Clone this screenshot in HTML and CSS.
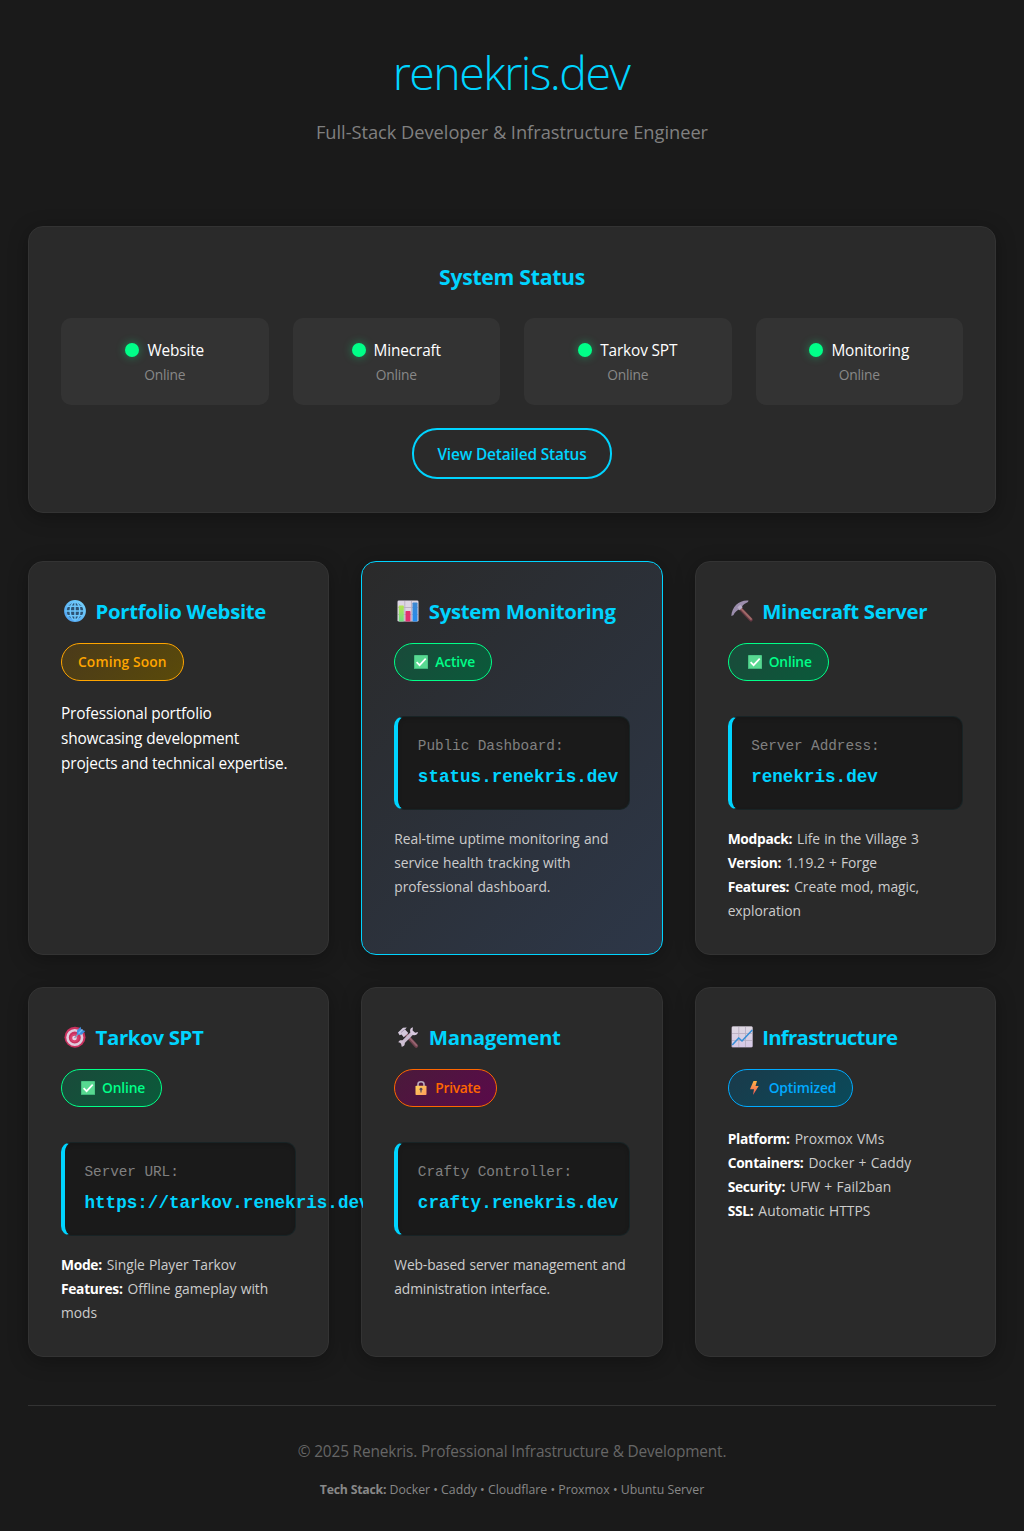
FILE: index.html
```html
<!DOCTYPE html>
<html lang="en">
<head>
<meta charset="utf-8">
<meta name="viewport" content="width=device-width, initial-scale=1">
<title>renekris.dev</title>
<link rel="stylesheet" href="styles.css">
</head>
<body>
<svg class="sprite" aria-hidden="true">
  <symbol id="check" viewBox="0 0 14 14">
    <rect width="14" height="14" rx=".6" fill="#3fb67a"/>
    <rect x=".7" y=".5" width="12.8" height="12.6" rx=".5" fill="#58d891"/>
    <path d="M2.6 7.2 5.6 10.2 11.7 3.7" fill="none" stroke="#fff" stroke-width="1.7"/>
  </symbol>
</svg>
<div class="container">
  <header class="header">
    <h1 class="title">renekris.dev</h1>
    <p class="subtitle">Full-Stack Developer &amp; Infrastructure Engineer</p>
  </header>

  <section class="status">
    <h2 class="status-title">System Status</h2>
    <div class="status-grid">
      <div class="status-item"><div class="status-name"><span class="dot"></span><span>Website</span></div><div class="status-state">Online</div></div>
      <div class="status-item"><div class="status-name"><span class="dot"></span><span>Minecraft</span></div><div class="status-state">Online</div></div>
      <div class="status-item"><div class="status-name"><span class="dot"></span><span>Tarkov SPT</span></div><div class="status-state">Online</div></div>
      <div class="status-item"><div class="status-name"><span class="dot"></span><span>Monitoring</span></div><div class="status-state">Online</div></div>
    </div>
    <a class="status-button" href="#">View Detailed Status</a>
  </section>

  <main class="cards">
    <article class="card">
      <h3 class="card-title">
        <svg class="icon" viewBox="0 0 22 22"><defs><linearGradient id="gl" x1="1" y1="0" x2="0" y2="1"><stop offset="0" stop-color="#79d8ff"/><stop offset="1" stop-color="#4b9df0"/></linearGradient></defs><circle cx="11" cy="11" r="10.9" fill="url(#gl)"/><circle cx="11" cy="11" r="8.300" fill="#2d5273"/><g fill="none" stroke="#6cc6fb" stroke-width="1.500"><ellipse cx="11" cy="11" rx="4.800" ry="9"/><path d="M11 1.500V20.500M1.500 11H20.500M3 6.200H19M3 15.800H19"/></g></svg>
        <span>Portfolio Website</span></h3>
      <div class="badge badge-soon"><span>Coming Soon</span></div>
      <p class="intro">Professional portfolio showcasing development projects and technical expertise.</p>
    </article>

    <article class="card card-featured">
      <h3 class="card-title">
        <svg class="icon" viewBox="0 0 22 22"><defs><linearGradient id="pg" x1="0" y1="0" x2="0" y2="1"><stop offset="0" stop-color="#b5e44f"/><stop offset="1" stop-color="#6fdc83"/></linearGradient><linearGradient id="pb" x1="0" y1="0" x2="0" y2="1"><stop offset="0" stop-color="#3f87cf"/><stop offset="1" stop-color="#248cf0"/></linearGradient></defs><rect x=".5" y=".5" width="21" height="21" rx="1.300" fill="#ddd6e4"/><path d="M7.800 1V21M14.500 1V21M1 7.500H21M1 14.500H21" stroke="#b9afc2" stroke-width=".9"/><rect x="1.800" y="5.500" width="5" height="16" rx=".7" fill="url(#pg)"/><rect x="8.500" y="11" width="5" height="10.500" rx=".7" fill="#e0316f"/><rect x="15.500" y="2.500" width="5" height="19" rx=".7" fill="url(#pb)"/></svg>
        <span>System Monitoring</span></h3>
      <div class="badge badge-online"><svg class="badge-icon"><use href="#check"/></svg><span>Active</span></div>
      <div class="code"><div class="code-label">Public Dashboard:</div><div class="code-url">status.renekris.dev</div></div>
      <p class="details">Real-time uptime monitoring and service health tracking with professional dashboard.</p>
    </article>

    <article class="card">
      <h3 class="card-title">
        <svg class="icon" viewBox="0 0 22 22"><path d="M9 8.200 20 19.700" stroke="#683a45" stroke-width="3.400" stroke-linecap="round"/><path d="M9.500 8.200 20 19" stroke="#a06a68" stroke-width="1.800" stroke-linecap="round"/><path d="M17.500.5C8.500-.4 1 6.300.3 15.900L2.300 15.200C4 12 6 10.400 8.200 9.600L10.900 7C12 4.400 14.500 3 17 1.900Z" fill="#9b8dac"/><path d="M6.400 7.300 9.300 4.800 11.600 7.300 8.700 10.200Z" fill="#b9adc7"/></svg>
        <span>Minecraft Server</span></h3>
      <div class="badge badge-online"><svg class="badge-icon"><use href="#check"/></svg><span>Online</span></div>
      <div class="code"><div class="code-label">Server Address:</div><div class="code-url">renekris.dev</div></div>
      <p class="details"><strong>Modpack:</strong> Life in the Village 3<br><strong>Version:</strong> 1.19.2 + Forge<br><strong>Features:</strong> Create mod, magic, exploration</p>
    </article>

    <article class="card">
      <h3 class="card-title">
        <svg class="icon" viewBox="0 0 22 22"><circle cx="11" cy="11.200" r="10.500" fill="#ca315f"/><circle cx="10.800" cy="11.500" r="7.300" fill="none" stroke="#dfcbdc" stroke-width="2.600"/><circle cx="10.500" cy="12" r="4.300" fill="#d9426f"/><circle cx="10.500" cy="12" r="2.300" fill="#ead5e5"/><path d="M10.500 12 16 6" stroke="#8f9fbd" stroke-width="1.300"/><path d="M12.800 8.500 13 4.500 16.500.8 17.400 3.800 21.300 5 17.500 8.800Z" fill="#3d91df"/><path d="M14.500 7.500 18.500 3.500" stroke="#72c4f7" stroke-width="1.200"/></svg>
        <span>Tarkov SPT</span></h3>
      <div class="badge badge-online"><svg class="badge-icon"><use href="#check"/></svg><span>Online</span></div>
      <div class="code"><div class="code-label">Server URL:</div><div class="code-url code-url-long">https://tarkov.renekris.dev</div></div>
      <p class="details"><strong>Mode:</strong> Single Player Tarkov<br><strong>Features:</strong> Offline gameplay with mods</p>
    </article>

    <article class="card">
      <h3 class="card-title">
        <svg class="icon" viewBox="0 0 22 22"><path d="M8.500 8 19.300 20" stroke="#70434f" stroke-width="3.600" stroke-linecap="round"/><path d="M9 8 19.500 19.300" stroke="#976571" stroke-width="1.700" stroke-linecap="round"/><path d="M1 6.600 6 1.800 9.800 1.500 8 3.500 11.300 7 6.800 11.200 4.500 8.600 2.600 9.200Z" fill="#d4c9dc"/><path d="M4 6.500 8 3.200" stroke="#aa9bb4" stroke-width="1"/><path d="M4.300 18.100 14.800 7.500" stroke="#c9bacf" stroke-width="3.600"/><path d="M15.900 1.300C12.500 2 12.500 5.600 14.300 8.200 17 10.300 20.500 9 21 5.900L18.200 6.800 15.600 4.500Z" fill="#d8c9df"/><path d="M1.300 16.300 4 17 4.700 20.700C8 20.500 8.400 17.500 7 15.600 5.200 13.700 2.200 13.700 1.300 16.300Z" fill="#cfc0d4"/></svg>
        <span>Management</span></h3>
      <div class="badge badge-private"><svg class="badge-icon" viewBox="0 0 14 14"><defs><linearGradient id="lk" x1="0" y1="0" x2="1" y2="1"><stop offset="0" stop-color="#ffd35a"/><stop offset="1" stop-color="#ff9a5c"/></linearGradient></defs><path d="M4 6V3.300Q4 .8 7 .8T10 3.300V6" fill="none" stroke="#b9a9bd" stroke-width="1.600"/><rect x="1.500" y="4.800" width="11" height="9.200" rx=".8" fill="url(#lk)"/><circle cx="7" cy="8.200" r="1.400" fill="#5b4a55"/><path d="M7 8.500V11.500" stroke="#5b4a55" stroke-width="1.200"/></svg><span>Private</span></div>
      <div class="code"><div class="code-label">Crafty Controller:</div><div class="code-url">crafty.renekris.dev</div></div>
      <p class="details details-tight">Web-based server management and administration interface.</p>
    </article>

    <article class="card">
      <h3 class="card-title card-title-tight">
        <svg class="icon" viewBox="0 0 22 22"><defs><linearGradient id="tr" x1="0" y1="0" x2="0" y2="1"><stop offset="0" stop-color="#ded8e2"/><stop offset="1" stop-color="#d5c8e6"/></linearGradient></defs><rect x=".5" y=".5" width="21" height="21" rx="1.300" fill="#a99bb2"/><rect x="1" y=".5" width="20.500" height="20.500" rx="1" fill="url(#tr)"/><path d="M7.800 1V21M14.500 1V21M1 7.500H21M1 14.500H21" stroke="#b9afc2" stroke-width=".9"/><path d="M1.200 19 7.700 12 11 15 21.300 4" fill="none" stroke="#378fd6" stroke-width="1.600"/></svg>
        <span>Infrastructure</span></h3>
      <div class="badge badge-optimized"><svg class="badge-icon" viewBox="0 0 14 14"><defs><linearGradient id="bt" x1="0" y1="0" x2="0" y2="1"><stop offset="0" stop-color="#ffb545"/><stop offset="1" stop-color="#f45758"/></linearGradient></defs><path d="M5.500 0H9L7.500 5H10.700L5 14 6 8.300H2Z" fill="url(#bt)"/></svg><span>Optimized</span></div>
      <p class="details details-wide"><strong>Platform:</strong> Proxmox VMs<br><strong>Containers:</strong> Docker + Caddy<br><strong>Security:</strong> UFW + Fail2ban<br><strong>SSL:</strong> Automatic HTTPS</p>
    </article>
  </main>

  <footer class="footer">
    <p class="copyright">© 2025 Renekris. Professional Infrastructure &amp; Development.</p>
    <p class="stack"><strong>Tech Stack:</strong> Docker • Caddy • Cloudflare • Proxmox • Ubuntu Server</p>
  </footer>
</div>
</body>
</html>
```
FILE: styles.css
```css
* { box-sizing: border-box; margin: 0; padding: 0; }

body {
  background: #1a1a1a;
  color: #fff;
  font-family: "Open Sans", "Noto Sans", sans-serif;
  font-size: 15.4px;
}

.sprite { display: none; }

.container { padding: 36px 28px 0; }

/* Header */
.header { text-align: center; padding-bottom: 79px; }
.title { font-size: 46.5px; font-weight: 300; line-height: 72px; letter-spacing: -1.55px; text-indent: -2px; color: #00d4ff; }
.subtitle { margin-top: 9px; font-size: 18.3px; font-weight: 400; line-height: 30px; letter-spacing: -0.04px; color: #808080; }

/* System status */
.status,
.card {
  background: #2a2a2a;
  border: 1px solid #333;
  border-radius: 15px;
  box-shadow: 0 4px 20px rgba(0, 0, 0, 0.3);
}
.status { display: flex; flex-direction: column; align-items: center; padding: 32px; height: 287px; }
.status-title { font-size: 21.2px; font-weight: 700; line-height: 36px; letter-spacing: -0.28px; color: #00d4ff; }
.status-grid { display: grid; grid-template-columns: repeat(4, 1fr); gap: 24px; width: 100%; margin-top: 23px; }
.status-item { padding: 21px 16px 18px; background: #333; border-radius: 10px; text-align: center; line-height: 24px; }
.status-name { display: flex; justify-content: center; align-items: center; gap: 8px; height: 24px; letter-spacing: -0.14px; }
.dot { width: 14px; height: 14px; margin-top: -3px; border-radius: 50%; background: #00ff88; box-shadow: 0 0 10px rgba(0, 255, 136, 0.4); }
.status-state { margin-top: -0.5px; font-size: 13.8px; letter-spacing: -0.2px; color: #888; }
.status-button {
  margin-top: 23.5px;
  height: 51px;
  padding: 2px 23.5px 0;
  border: 2px solid #00d4ff;
  border-radius: 25px;
  color: #00d4ff;
  font-weight: 600;
  line-height: 46px;
  letter-spacing: -0.16px;
  text-decoration: none;
}

/* Service cards */
.cards { display: grid; grid-template-columns: repeat(3, 1fr); gap: 32px; margin-top: 48px; }
.card { padding: 32px 32px 31.5px; min-width: 0; }
.card-featured { background: linear-gradient(135deg, #2a2a2a 0%, #2d3748 100%); border-color: #00d4ff; }
.card-title { display: flex; align-items: center; gap: 9.5px; font-size: 20.4px; font-weight: 700; line-height: 34px; letter-spacing: -0.34px; color: #00d4ff; white-space: nowrap; }
.card-title-tight { letter-spacing: -0.73px; }
.icon { flex: none; width: 22px; height: 22px; margin-left: 3px; }

.badge {
  display: flex;
  align-items: center;
  width: max-content;
  height: 38px;
  margin-top: 14.5px;
  padding: 0 16px;
  border: 1px solid;
  border-radius: 20px;
  font-size: 13.8px;
  font-weight: 600;
  letter-spacing: -0.16px;
}
.badge-icon { width: 14px; height: 14px; margin: 0 7px 0 3px; }
.badge-soon { background: linear-gradient(135deg, #4a3a1a, #5a4a0a); color: #ffa500; letter-spacing: 0.12px; }
.badge-online { background: linear-gradient(135deg, #1a4a3a, #0a5a3a); color: #00ff88; }
.badge-private { background: linear-gradient(135deg, #4a1a3a, #5a0a4a); color: #ff6600; letter-spacing: -0.3px; }
.badge-optimized { background: linear-gradient(135deg, #1a3a4a, #0a4a5a); color: #00aaff; }

.intro { margin-top: 20px; line-height: 25px; letter-spacing: -0.16px; }

.code {
  height: 94.5px;
  margin-top: 35px;
  padding: 17.5px 19.5px;
  background: #1a1a1a;
  border: 1px solid rgba(0, 212, 255, 0.05);
  border-left: 4px solid #00d4ff;
  border-radius: 10px;
  box-shadow: inset 0 2px 4px rgba(0, 0, 0, 0.15);
  font-family: "Courier New", "Liberation Mono", monospace;
  white-space: nowrap;
}
.code-label { font-size: 14.4px; line-height: 25px; letter-spacing: -0.07px; color: #808080; }
.code-url { margin-top: 3px; font-size: 17.6px; font-weight: 700; line-height: 31px; color: #00d4ff; }
/* The long address runs across the gutter up to the neighbouring card. */
.code-url-long { position: relative; z-index: 1; width: 278px; overflow: hidden; }

.details { margin-top: 20px; font-size: 13.8px; line-height: 24px; word-spacing: 0.6px; letter-spacing: -0.03px; color: #ccc; }
.details strong { margin-right: 0.8px; color: #fff; letter-spacing: -0.31px; }
.details-tight { letter-spacing: -0.13px; }
.details-wide { letter-spacing: 0.05px; }
.code + .details { margin-top: 16.5px; }

/* Footer */
.footer { margin-top: 48px; padding: 32.5px 0 32px; border-top: 1px solid #333; text-align: center; }
.copyright { line-height: 26px; letter-spacing: -0.15px; color: #666; }
.stack { margin-top: 15px; font-size: 12.3px; line-height: 20px; color: #888; }
.stack strong { letter-spacing: -0.23px; }
```
